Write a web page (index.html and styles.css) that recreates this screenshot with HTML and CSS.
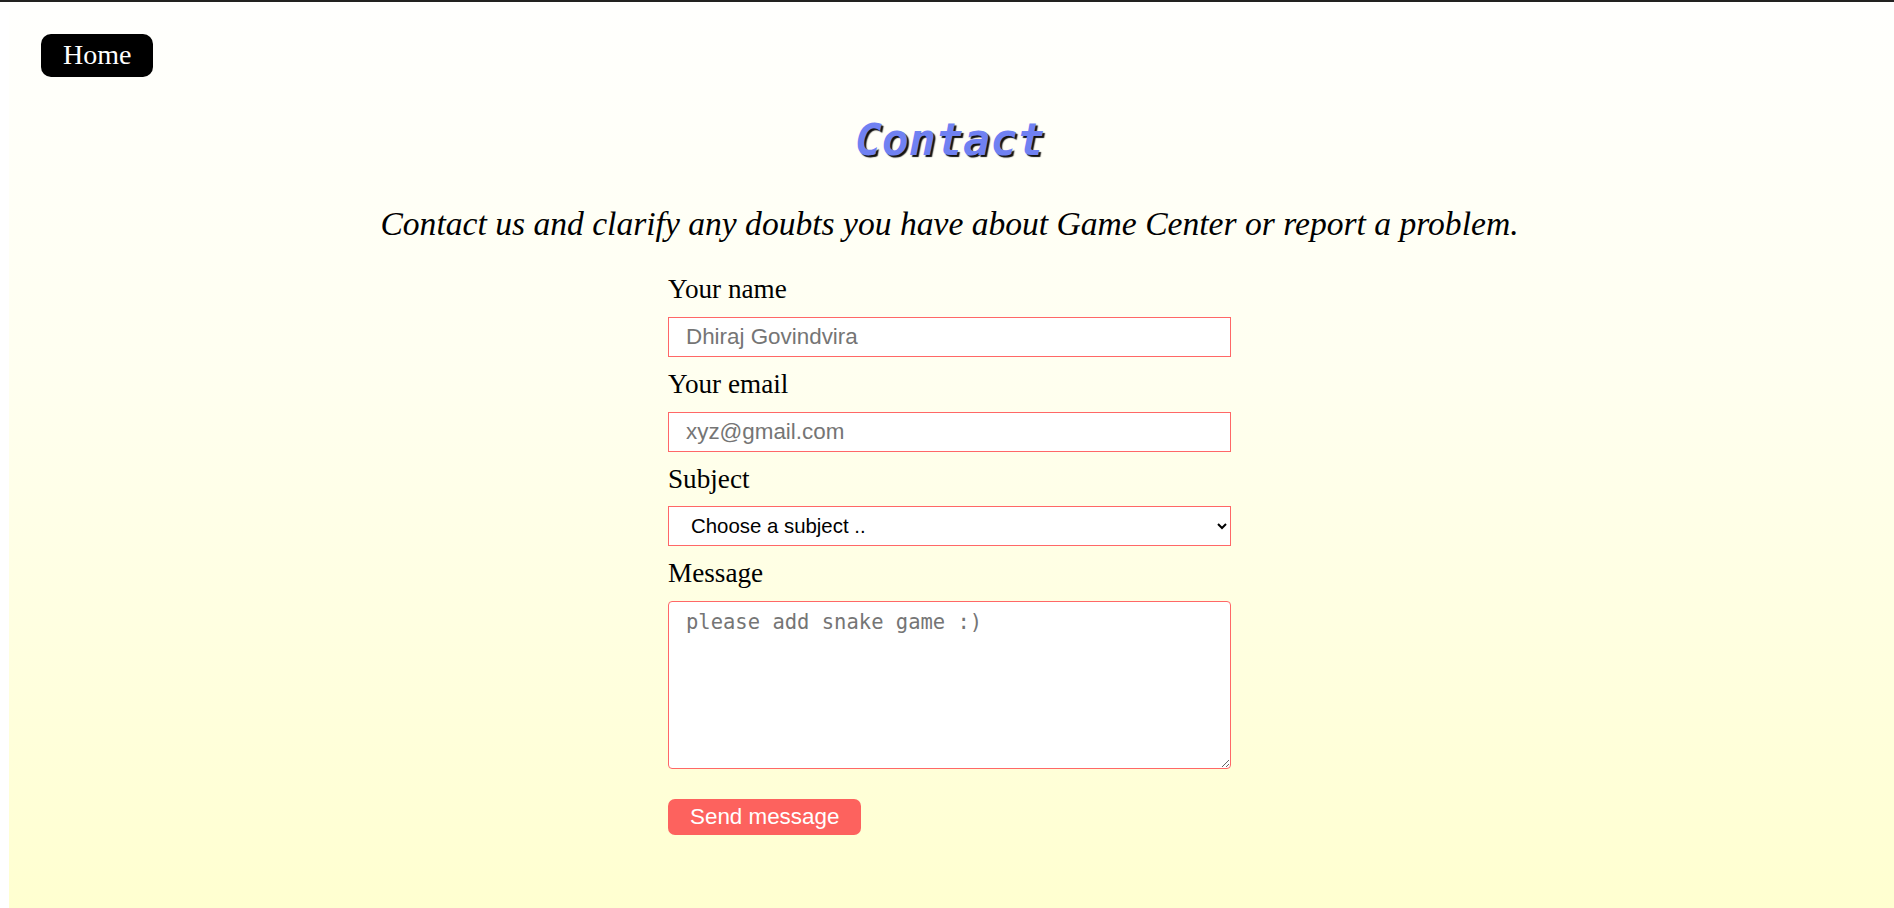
FILE: index.html
```html
<!DOCTYPE html>
<html lang="en">
<head>
<meta charset="utf-8">
<title>Contact</title>
<link rel="stylesheet" href="styles.css">
</head>
<body>
<div class="page">
  <nav class="nav">
    <a class="home-btn" href="#">Home</a>
  </nav>
  <h1 class="title">Contact</h1>
  <p class="subtitle">Contact us and clarify any doubts you have about Game Center or report a problem.</p>
  <form class="contact-form">
    <div class="field">
      <label class="label" for="name">Your name</label>
      <input class="control" id="name" type="text" placeholder="Dhiraj Govindvira">
    </div>
    <div class="field">
      <label class="label" for="email">Your email</label>
      <input class="control" id="email" type="email" placeholder="xyz@gmail.com">
    </div>
    <div class="field">
      <label class="label" for="subject">Subject</label>
      <select class="control select" id="subject">
        <option>Choose a subject ..</option>
      </select>
    </div>
    <div class="field">
      <label class="label" for="message">Message</label>
      <textarea class="message" id="message" placeholder="please add snake game :)"></textarea>
    </div>
    <button class="send-btn" type="button">Send message</button>
  </form>
</div>
</body>
</html>
```

FILE: styles.css
```css
html, body {
  margin: 0;
  padding: 0;
  background: #ffffff;
}

body {
  border-top: 2px solid #222222;
  font-family: "Liberation Serif", "Times New Roman", serif;
  color: #000;
  overflow: hidden;
}

.page {
  margin: 8px 0 0 9px;
  padding: 24px 4px 40px 32px;
  min-height: calc(100vh - 10px);
  box-sizing: border-box;
  background: linear-gradient(to bottom, #fffffd 0%, #fffff0 40%, #ffffd0 100%);
  display: flex;
  flex-direction: column;
}

.nav {
  display: flex;
}

.home-btn {
  display: inline-block;
  background: #000;
  color: #fff;
  text-decoration: none;
  font-family: "Liberation Serif", "Times New Roman", serif;
  font-size: 28px;
  padding: 5px 22px 6px 22px;
  border-radius: 10px;
}

.title {
  margin: 36px 0 0 -32px;
  text-align: center;
  font-family: "DejaVu Sans Mono", monospace;
  font-weight: bold;
  font-style: italic;
  font-size: 45px;
  line-height: normal;
  color: #7081f2;
  text-shadow: 2px 2px 1px #111;
}

.subtitle {
  margin: 39px 0 0 -32px;
  text-align: center;
  font-style: italic;
  font-size: 33.6px;
  line-height: normal;
}

.contact-form {
  width: 563px;
  margin: 31px auto 0 auto;
  position: relative;
  left: -16px;
  display: flex;
  flex-direction: column;
  gap: 12px;
}

.field {
  display: flex;
  flex-direction: column;
  gap: 12px;
}

.label {
  font-size: 27.2px;
  line-height: 30.8px;
}

.control {
  box-sizing: border-box;
  width: 100%;
  height: 40px;
  margin: 0;
  border: 1px solid #ff6767;
  border-radius: 0;
  background: #fff;
  padding: 0 17px;
  font-family: "Liberation Sans", Arial, sans-serif;
  font-size: 22.4px;
  color: #000;
  outline: none;
}

.control::placeholder {
  color: #757575;
}

.select {
  font-size: 20.4px;
  padding-left: 18px;
}

.message {
  display: block;
  box-sizing: border-box;
  width: 100%;
  height: 168px;
  margin: 0;
  border: 1px solid #ff6767;
  border-radius: 4px;
  background: #fff;
  padding: 8px 17px;
  font-family: "DejaVu Sans Mono", "Liberation Mono", monospace;
  font-size: 20.5px;
  outline: none;
}

.message::placeholder {
  color: #757575;
}

.send-btn {
  align-self: flex-start;
  margin-top: 18px;
  background: #fd625e;
  color: #fff;
  border: none;
  border-radius: 7px;
  padding: 5px 22px;
  font-family: "Liberation Sans", Arial, sans-serif;
  font-size: 22.4px;
  line-height: normal;
  cursor: pointer;
}
```
